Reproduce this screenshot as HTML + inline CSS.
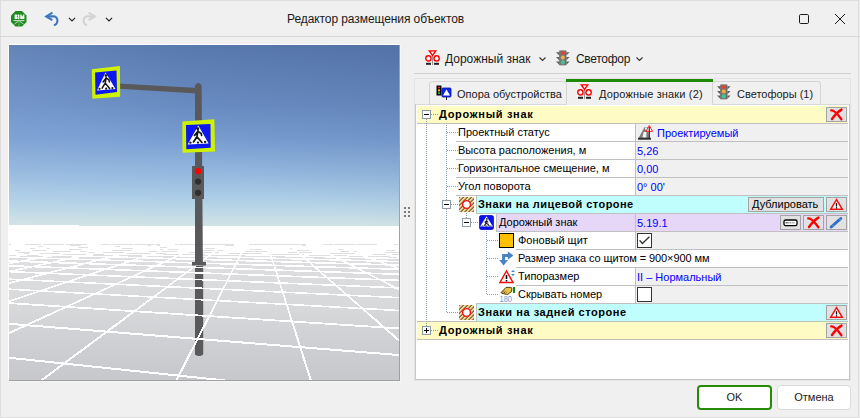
<!DOCTYPE html>
<html><head><meta charset="utf-8">
<style>
*{margin:0;padding:0;box-sizing:border-box}
html,body{width:860px;height:418px;overflow:hidden;background:#f0f0f0;font-family:"Liberation Sans",sans-serif;color:#000}
.a{position:absolute}
#win{position:absolute;left:0;top:0;width:859px;height:418px;border:1px solid #dddddd}
.t11{font-size:11px;line-height:13px;white-space:nowrap}
.b12{font-size:11px;font-weight:bold;line-height:13px;white-space:nowrap}
.ui{font-size:11px;line-height:13px;white-space:nowrap;color:#1a1a1a}
.row{position:absolute;height:17px}
.hl{position:absolute;height:1px;background:#c8c8c8}
.dv{position:absolute;border-left:1px dotted #8a9aa0;width:0}
.dh{position:absolute;border-top:1px dotted #8a9aa0;height:0}
.exp{position:absolute;width:9px;height:9px;border:1px solid #8fa3ad;background:#fff}
.exp:after{content:"";position:absolute;left:1px;top:3px;width:5px;height:1px;background:#000}
.exp.plus:before{content:"";position:absolute;left:3px;top:1px;width:1px;height:5px;background:#000}
.btn{position:absolute;border:1px solid #a0a0a0;background:#e6e6e6}
</style></head><body>
<div id="win"></div><div class="a" style="left:859px;top:0;width:1px;height:418px;background:#e9e9e9"></div>

<!-- title bar -->
<div class="a" style="left:0;top:36px;width:860px;height:1px;background:#d6d6d6"></div>

<!-- BIM logo -->
<svg class="a" style="left:10px;top:10px" width="18" height="18" viewBox="0 0 18 18">
<polygon points="5.5,1 12,1 16.5,5.5 16.5,12 12,16.5 5.5,16.5 1,12 1,5.5" fill="#1f8a1f"/>
<path d="M4.6 4.5 h2 a1.1 1.1 0 0 1 0 2.2 a1.2 1.2 0 0 1 0 2.4 h-2 Z" fill="#e8f4e8"/>
<rect x="8" y="4.5" width="1.4" height="4.6" fill="#e8f4e8"/>
<path d="M10.2 9.1 V4.5 H11.4 L12.3 6.8 L13.2 4.5 H14.4 V9.1 Z" fill="#e8f4e8"/>
<path d="M3.5 10.6 H14.5" stroke="#fff" stroke-width="0.8"/>
<path d="M8.5 11.2 L4.5 14 M9.5 11.2 L13.5 14 M9 12.5 V13.4 M9 14.3 V15.5" stroke="#dfeedd" stroke-width="0.8" fill="none"/>
</svg>
<!-- undo -->
<svg class="a" style="left:42px;top:9px" width="20" height="20" viewBox="0 0 20 20">
<path d="M10.5 3.6 L4.2 7.4 L10.3 11.2" stroke="#3b78c1" stroke-width="2.1" fill="none" stroke-linejoin="miter"/>
<path d="M4.8 7.4 H12 A3.5 4.3 0 0 1 11.8 16" stroke="#3b78c1" stroke-width="2.1" fill="none"/>
</svg>
<svg class="a" style="left:68px;top:17px" width="8" height="5" viewBox="0 0 8 5"><path d="M0.9 0.9 L4 4 L7.1 0.9" stroke="#222" stroke-width="1.1" fill="none"/></svg>
<svg class="a" style="left:79px;top:9px" width="20" height="20" viewBox="0 0 20 20">
<path d="M9.5 3.6 L15.8 7.4 L9.7 11.2" stroke="#d3d3d3" stroke-width="2.1" fill="none"/>
<path d="M15.2 7.4 H8 A3.5 4.3 0 0 0 8.2 16" stroke="#d3d3d3" stroke-width="2.1" fill="none"/>
</svg>
<svg class="a" style="left:105px;top:17px" width="8" height="5" viewBox="0 0 8 5"><path d="M0.9 0.9 L4 4 L7.1 0.9" stroke="#222" stroke-width="1.1" fill="none"/></svg>

<div class="a" style="left:287px;top:12px;font-size:12px;line-height:14px;color:#1a1a1a;white-space:nowrap;letter-spacing:-0.08px">Редактор размещения объектов</div>

<svg class="a" style="left:798px;top:13px" width="12" height="12" viewBox="0 0 12 12"><rect x="1.5" y="1.5" width="9" height="9" rx="1.2" stroke="#1a1a1a" stroke-width="1" fill="none"/></svg>
<svg class="a" style="left:834px;top:13px" width="12" height="12" viewBox="0 0 12 12"><path d="M1 1 L11 11 M11 1 L1 11" stroke="#1a1a1a" stroke-width="1" fill="none"/></svg>

<!-- 3D view -->
<div class="a" style="left:8px;top:44px;width:393px;height:338px;background:#fff"></div>
<div class="a" style="left:400px;top:44px;width:1px;height:338px;background:#f5f5f5"></div>
<div class="a" style="left:8px;top:381px;width:393px;height:1px;background:#f5f5f5"></div>
<div class="a" style="left:399px;top:45px;width:1px;height:336px;background:#a0a0a0"></div>
<div class="a" style="left:9px;top:380px;width:391px;height:1px;background:#a0a0a0"></div>
<div class="a" style="left:9px;top:45px;width:390px;height:181px;background:linear-gradient(to bottom,#5f82b8 0px,#6c90c7 60px,#7a9fd3 95px,#96badf 130px,#aacbe6 150px,#bcd7e6 165px,#d3e3e4 181px)"></div>
<div class="a" style="left:9px;top:45px;width:390px;height:181px;background:linear-gradient(to right,rgba(255,255,255,0.05) 0%,rgba(255,255,255,0) 45%,rgba(0,0,0,0) 55%),linear-gradient(200deg,rgba(0,10,50,0.13) 0%,rgba(0,10,50,0.05) 35%,rgba(0,0,0,0) 60%)"></div>
<div class="a" style="left:9px;top:226px;width:390px;height:154px;background:linear-gradient(to bottom,#ffffff 0px,#ffffff 18px,#e0e0e2 18px,#d8d9db 79px,#cfd0d3 114px,#c7c8cb 153px)"></div>
<div class="a" style="left:9px;top:225px;width:70px;height:1px;background:#fff"></div>
<svg class="a" style="left:0;top:0" width="420" height="400"><path d="M195 266 H203.2 V354.5 Q199 357.5 195 354.5 Z" fill="#59595b"/></svg>
<svg class="a" style="left:9px;top:45px" width="390" height="335" viewBox="0 0 390 335"><path d="M-68.22 368.32L-27.89 374.51M-68.61 305.55L447.74 359.81M-68.80 273.28L448.99 314.78M-68.89 319.66L-47.13 309.69M-47.13 309.69L-25.36 299.72M-25.36 299.72L-3.60 289.75M-3.60 289.75L18.17 279.78M-19.01 373.53L0.45 359.07M0.45 359.07L19.91 344.61M19.91 344.61L39.37 330.15M39.37 330.15L58.83 315.69M58.83 315.69L78.29 301.23M78.29 301.23L97.75 286.77M97.75 286.77L117.22 272.31M147.78 373.60L155.19 359.14M155.19 359.14L162.59 344.67M162.59 344.67L169.99 330.21M169.99 330.21L177.40 315.74M177.40 315.74L184.80 301.28M184.80 301.28L192.20 286.82M192.20 286.82L199.61 272.35M314.04 373.68L309.42 359.20M309.42 359.20L304.81 344.73M304.81 344.73L300.19 330.26M300.19 330.26L295.58 315.79M295.58 315.79L290.96 301.32M290.96 301.32L286.35 286.84M286.35 286.84L281.73 272.37M450.16 347.93L436.03 335.60M436.03 335.60L421.90 323.28M421.90 323.28L407.78 310.95M407.78 310.95L393.65 298.63M393.65 298.63L379.52 286.30M379.52 286.30L365.39 273.98" stroke="#ffffff" stroke-width="2.0" fill="none" shape-rendering="crispEdges"/><path d="M-68.93 253.63L449.75 287.31M-68.69 278.96L-48.80 272.38M-48.80 272.38L-28.90 265.80M-28.90 265.80L-9.01 259.22M18.17 279.78L39.93 269.81M39.93 269.81L61.70 259.84M117.22 272.31L136.68 257.85M199.61 272.35L207.01 257.89M281.73 272.37L277.12 257.90M365.39 273.98L351.26 261.65M450.21 274.99L437.90 268.75M437.90 268.75L425.58 262.50" stroke="#ffffff" stroke-width="1.8" fill="none" shape-rendering="crispEdges"/><path d="M-67.65 240.48L450.27 268.82M-67.90 230.95L450.64 255.51M-68.09 223.77L450.91 245.48M-68.24 218.17L449.35 237.57M-68.36 213.67L449.70 231.30M-68.45 209.99L449.99 226.15M-68.53 206.91L450.23 221.85M-68.60 204.31L450.43 218.21M-68.66 202.07L450.61 215.08M-68.71 200.13L450.76 212.36M2.19 200.01L450.89 209.98M77.56 200.01L450.06 207.86M151.36 200.01L450.22 206.00M224.82 200.01L450.36 204.32M296.68 200.00L450.48 202.82M368.29 200.01L450.60 201.45M438.29 200.00L450.70 200.21M-68.70 200.95L-67.79 200.87M-67.79 200.87L-66.87 200.79M-66.87 200.79L-65.96 200.71M-65.96 200.71L-65.04 200.63M-65.04 200.63L-64.13 200.56M-64.13 200.56L-63.21 200.48M-63.21 200.48L-62.30 200.40M-62.30 200.40L-61.38 200.32M-61.38 200.32L-60.47 200.24M-60.47 200.24L-59.55 200.16M-59.55 200.16L-58.64 200.08M-58.64 200.08L-57.72 200.00M-68.75 203.19L-65.91 202.92M-65.91 202.92L-63.07 202.66M-63.07 202.66L-60.24 202.40M-60.24 202.40L-57.40 202.13M-57.40 202.13L-54.56 201.87M-54.56 201.87L-51.73 201.60M-51.73 201.60L-48.89 201.34M-48.89 201.34L-46.05 201.08M-46.05 201.08L-43.22 200.81M-43.22 200.81L-40.38 200.55M-40.38 200.55L-37.54 200.28M-37.54 200.28L-34.71 200.02M-68.80 205.82L-64.02 205.33M-64.02 205.33L-59.24 204.85M-59.24 204.85L-54.46 204.36M-54.46 204.36L-49.68 203.88M-49.68 203.88L-44.90 203.39M-44.90 203.39L-40.12 202.91M-40.12 202.91L-35.34 202.43M-35.34 202.43L-30.56 201.94M-30.56 201.94L-25.78 201.46M-25.78 201.46L-21.00 200.97M-21.00 200.97L-16.22 200.49M-16.22 200.49L-11.44 200.00M-68.85 208.94L-62.16 208.19M-62.16 208.19L-55.48 207.45M-55.48 207.45L-48.79 206.71M-48.79 206.71L-42.10 205.97M-42.10 205.97L-35.41 205.22M-35.41 205.22L-28.72 204.48M-28.72 204.48L-22.03 203.74M-22.03 203.74L-15.34 202.99M-15.34 202.99L-8.65 202.25M-8.65 202.25L-1.96 201.51M-1.96 201.51L4.73 200.76M4.73 200.76L11.42 200.02M-68.92 212.71L-60.31 211.65M-60.31 211.65L-51.69 210.59M-51.69 210.59L-43.08 209.53M-43.08 209.53L-34.46 208.48M-34.46 208.48L-25.85 207.42M-25.85 207.42L-17.23 206.36M-17.23 206.36L-8.61 205.30M-8.61 205.30L0.00 204.24M0.00 204.24L8.62 203.18M8.62 203.18L17.23 202.12M17.23 202.12L25.85 201.06M25.85 201.06L34.47 200.01M-68.39 217.28L-57.93 215.84M-57.93 215.84L-47.46 214.40M-47.46 214.40L-37.00 212.96M-37.00 212.96L-26.54 211.52M-26.54 211.52L-16.07 210.09M-16.07 210.09L-5.61 208.65M-5.61 208.65L4.85 207.21M4.85 207.21L15.32 205.77M15.32 205.77L25.78 204.34M25.78 204.34L36.24 202.90M36.24 202.90L46.71 201.46M46.71 201.46L57.17 200.02M-68.42 223.13L-56.05 221.20M-56.05 221.20L-43.68 219.27M-43.68 219.27L-31.31 217.35M-31.31 217.35L-18.94 215.42M-18.94 215.42L-6.57 213.49M-6.57 213.49L5.80 211.57M5.80 211.57L18.17 209.64M18.17 209.64L30.54 207.71M30.54 207.71L42.91 205.79M42.91 205.79L55.27 203.86M55.27 203.86L67.64 201.93M67.64 201.93L80.01 200.01M-68.46 230.75L-54.21 228.19M-54.21 228.19L-39.95 225.63M-39.95 225.63L-25.70 223.07M-25.70 223.07L-11.45 220.51M-11.45 220.51L2.80 217.95M2.80 217.95L17.05 215.39M17.05 215.39L31.31 212.83M31.31 212.83L45.56 210.27M45.56 210.27L59.81 207.71M59.81 207.71L74.06 205.14M74.06 205.14L88.31 202.58M88.31 202.58L102.57 200.02M-68.51 241.09L-52.37 237.67M-52.37 237.67L-36.22 234.24M-36.22 234.24L-20.08 230.82M-20.08 230.82L-3.94 227.40M-3.94 227.40L12.20 223.97M12.20 223.97L28.35 220.55M28.35 220.55L44.49 217.13M44.49 217.13L60.63 213.70M60.63 213.70L76.77 210.28M76.77 210.28L92.92 206.86M92.92 206.86L109.06 203.43M109.06 203.43L125.20 200.01M-68.58 255.92L-50.57 251.26M-50.57 251.26L-32.55 246.60M-32.55 246.60L-14.53 241.94M-14.53 241.94L3.48 237.29M3.48 237.29L21.50 232.63M21.50 232.63L39.51 227.97M39.51 227.97L57.53 223.31M57.53 223.31L75.54 218.66M75.54 218.66L93.56 214.00M93.56 214.00L111.57 209.34M111.57 209.34L129.59 204.68M129.59 204.68L147.60 200.02M-9.01 259.22L10.88 252.64M10.88 252.64L30.78 246.06M30.78 246.06L50.67 239.48M50.67 239.48L70.57 232.91M70.57 232.91L90.46 226.33M90.46 226.33L110.35 219.75M110.35 219.75L130.25 213.17M130.25 213.17L150.14 206.59M150.14 206.59L170.04 200.01M61.70 259.84L83.46 249.87M83.46 249.87L105.23 239.90M105.23 239.90L126.99 229.93M126.99 229.93L148.76 219.96M148.76 219.96L170.52 209.99M170.52 209.99L192.29 200.03M136.68 257.85L156.14 243.39M156.14 243.39L175.60 228.93M175.60 228.93L195.06 214.47M195.06 214.47L214.52 200.01M207.01 257.89L214.41 243.42M214.41 243.42L221.82 228.96M221.82 228.96L229.22 214.49M229.22 214.49L236.62 200.03M277.12 257.90L272.50 243.43M272.50 243.43L267.89 228.96M267.89 228.96L263.27 214.48M263.27 214.48L258.66 200.01M351.26 261.65L337.13 249.33M337.13 249.33L323.00 237.00M323.00 237.00L308.87 224.68M308.87 224.68L294.74 212.35M294.74 212.35L280.62 200.03M425.58 262.50L413.27 256.25M413.27 256.25L400.96 250.00M400.96 250.00L388.64 243.75M388.64 243.75L376.33 237.50M376.33 237.50L364.02 231.25M364.02 231.25L351.71 225.01M351.71 225.01L339.39 218.76M339.39 218.76L327.08 212.51M327.08 212.51L314.77 206.26M314.77 206.26L302.45 200.01M450.85 245.37L440.30 241.59M440.30 241.59L429.75 237.82M429.75 237.82L419.21 234.04M419.21 234.04L408.66 230.26M408.66 230.26L398.11 226.48M398.11 226.48L387.56 222.70M387.56 222.70L377.01 218.92M377.01 218.92L366.46 215.14M366.46 215.14L355.91 211.36M355.91 211.36L345.36 207.59M345.36 207.59L334.81 203.81M334.81 203.81L324.27 200.03M450.72 229.05L441.99 226.63M441.99 226.63L433.25 224.21M433.25 224.21L424.52 221.79M424.52 221.79L415.78 219.37M415.78 219.37L407.05 216.95M407.05 216.95L398.32 214.53M398.32 214.53L389.58 212.11M389.58 212.11L380.85 209.69M380.85 209.69L372.11 207.27M372.11 207.27L363.38 204.85M363.38 204.85L354.64 202.43M354.64 202.43L345.91 200.01M450.64 218.80L443.72 217.24M443.72 217.24L436.79 215.67M436.79 215.67L429.87 214.11M429.87 214.11L422.95 212.55M422.95 212.55L416.03 210.98M416.03 210.98L409.11 209.42M409.11 209.42L402.19 207.85M402.19 207.85L395.27 206.29M395.27 206.29L388.34 204.72M388.34 204.72L381.42 203.16M381.42 203.16L374.50 201.59M374.50 201.59L367.58 200.03M450.91 211.83L445.76 210.85M445.76 210.85L440.60 209.86M440.60 209.86L435.44 208.88M435.44 208.88L430.29 207.89M430.29 207.89L425.13 206.91M425.13 206.91L419.97 205.92M419.97 205.92L414.82 204.94M414.82 204.94L409.66 203.95M409.66 203.95L404.50 202.97M404.50 202.97L399.35 201.98M399.35 201.98L394.19 201.00M394.19 201.00L389.03 200.01M450.83 206.69L447.46 206.13M447.46 206.13L444.08 205.58M444.08 205.58L440.71 205.02M440.71 205.02L437.34 204.46M437.34 204.46L433.97 203.90M433.97 203.90L430.60 203.35M430.60 203.35L427.23 202.79M427.23 202.79L423.86 202.23M423.86 202.23L420.49 201.67M420.49 201.67L417.12 201.12M417.12 201.12L413.75 200.56M413.75 200.56L410.38 200.00M450.76 202.78L449.18 202.55M449.18 202.55L447.60 202.32M447.60 202.32L446.03 202.09M446.03 202.09L444.45 201.86M444.45 201.86L442.87 201.63M442.87 201.63L441.29 201.40M441.29 201.40L439.71 201.17M439.71 201.17L438.14 200.94M438.14 200.94L436.56 200.71M436.56 200.71L434.98 200.48M434.98 200.48L433.40 200.25M433.40 200.25L431.83 200.02" stroke="#ffffff" stroke-width="1.6" fill="none" shape-rendering="crispEdges"/></svg>
<svg class="a" style="left:8px;top:44px" width="391" height="336" viewBox="8 44 391 336"><defs><clipPath id="vc"><rect x="9" y="45" width="390" height="335"/></clipPath></defs><g clip-path="url(#vc)"><path d="M195 265 V85.5 Q198.3 80.6 201.6 85.5 L202.9 265 Z" fill="#59595b"/><polygon points="192,262 206,262 206,265.5 192,265.5" fill="#59595b"/><polygon points="119,83.5 198,88 198,93.5 119,88.8" fill="#59595b"/><polygon points="91.8,69.3 119.9,66.1 120.2,96.8 92.3,98.7" fill="#cff200"/><polygon points="95,72.4 116.5,70.5 117,92.1 95.5,94.7" fill="#0c18ee"/><polygon points="105.5,72.6 97,90.5 115.5,89" fill="#ffffff"/><g transform="translate(97,72.6) scale(1.028,0.994)"><circle cx="8.7" cy="2.9" r="1.3" fill="#111"/><path d="M8.9 4.8 L8 10.6 M8.8 5.4 L11.6 7.4 L12 9.4 M8.5 5.8 L5.9 9.4 M8 10.6 L5 15.6 M8 10.6 L12.3 16" stroke="#151515" stroke-width="1.5" fill="none" stroke-linecap="round" stroke-linejoin="round"/><circle cx="2.4" cy="16.3" r="1.1" fill="#222"/><circle cx="8.9" cy="16.2" r="1.1" fill="#222"/><circle cx="15" cy="15.6" r="1.1" fill="#222"/></g><polygon points="182.3,121.4 214.4,119.3 215,151.4 182.5,152.7" fill="#cff200"/><polygon points="186,125 210.5,124 210.7,147.7 186.3,149.3" fill="#0c18ee"/><polygon points="198.3,125.6 187.6,144.5 208.6,143.5" fill="#ffffff"/><g transform="translate(187.6,125.6) scale(1.167,1.050)"><circle cx="8.7" cy="2.9" r="1.3" fill="#111"/><path d="M8.9 4.8 L8 10.6 M8.8 5.4 L11.6 7.4 L12 9.4 M8.5 5.8 L5.9 9.4 M8 10.6 L5 15.6 M8 10.6 L12.3 16" stroke="#151515" stroke-width="1.5" fill="none" stroke-linecap="round" stroke-linejoin="round"/><circle cx="2.4" cy="16.3" r="1.1" fill="#222"/><circle cx="8.9" cy="16.2" r="1.1" fill="#222"/><circle cx="15" cy="15.6" r="1.1" fill="#222"/></g><rect x="192" y="166" width="12" height="33" fill="#59595b"/><circle cx="198.1" cy="171.2" r="3.1" fill="#ff0000"/><circle cx="198.1" cy="181.6" r="3.1" fill="#2e2e2e"/><circle cx="198.1" cy="192.8" r="3.1" fill="#2e2e2e"/></g></svg>


<!-- grip -->
<div class="a" style="left:404px;top:207px;width:2px;height:2px;background:#7c7c7c"></div><div class="a" style="left:404px;top:211px;width:2px;height:2px;background:#7c7c7c"></div><div class="a" style="left:404px;top:215px;width:2px;height:2px;background:#7c7c7c"></div><div class="a" style="left:408px;top:207px;width:2px;height:2px;background:#7c7c7c"></div><div class="a" style="left:408px;top:211px;width:2px;height:2px;background:#7c7c7c"></div><div class="a" style="left:408px;top:215px;width:2px;height:2px;background:#7c7c7c"></div>
<!-- right panel -->
<div class="a" style="left:414px;top:73px;width:437px;height:1px;background:#d2d2d2"></div>
<div class="a" style="left:414px;top:78px;width:437px;height:1px;background:#e2e2e2"></div>
<div class="a" style="left:414px;top:78px;width:1px;height:303px;background:#e2e2e2"></div>
<div class="a" style="left:850px;top:78px;width:1px;height:303px;background:#e2e2e2"></div>
<div class="a" style="left:414px;top:380px;width:437px;height:1px;background:#e2e2e2"></div>
<div class="a" style="left:429px;top:81px;width:138px;height:24px;border:1px solid #d4d4d4;border-radius:3px 3px 0 0;background:#f0f0f0"></div>
<div class="a" style="left:712px;top:81px;width:109px;height:24px;border:1px solid #d4d4d4;border-radius:3px 3px 0 0;background:#f0f0f0"></div>
<div class="a" style="left:566px;top:79px;width:147px;height:3px;background:#1f8a06"></div>
<div class="a" style="left:415px;top:104px;width:435px;height:276px;border:1px solid #c8c8c8;border-top:1px solid #d8d8d8;background:#fff"></div>
<div class="a" style="left:567px;top:104px;width:145px;height:1px;background:#f0f0f0"></div>
<div class="a" style="left:417px;top:106px;width:431px;height:17px;background:#fefcc4"></div>
<div class="a" style="left:417px;top:123px;width:431px;height:1px;background:#c0c0c0"></div>
<div class="a" style="left:636px;top:124px;width:212px;height:17px;background:#f0f0f0"></div>
<div class="a" style="left:635px;top:124px;width:1px;height:17px;background:#c0c0c0"></div>
<div class="a" style="left:636px;top:142px;width:212px;height:17px;background:#f0f0f0"></div>
<div class="a" style="left:635px;top:142px;width:1px;height:17px;background:#c0c0c0"></div>
<div class="a" style="left:636px;top:160px;width:212px;height:17px;background:#f0f0f0"></div>
<div class="a" style="left:635px;top:160px;width:1px;height:17px;background:#c0c0c0"></div>
<div class="a" style="left:636px;top:178px;width:212px;height:17px;background:#f0f0f0"></div>
<div class="a" style="left:635px;top:178px;width:1px;height:17px;background:#c0c0c0"></div>
<div class="a" style="left:636px;top:232px;width:212px;height:17px;background:#f0f0f0"></div>
<div class="a" style="left:635px;top:232px;width:1px;height:17px;background:#c0c0c0"></div>
<div class="a" style="left:636px;top:268px;width:212px;height:17px;background:#f0f0f0"></div>
<div class="a" style="left:635px;top:268px;width:1px;height:17px;background:#c0c0c0"></div>
<div class="a" style="left:636px;top:286px;width:212px;height:17px;background:#f0f0f0"></div>
<div class="a" style="left:635px;top:286px;width:1px;height:17px;background:#c0c0c0"></div>
<div class="a" style="left:456px;top:141px;width:392px;height:1px;background:#c0c0c0"></div>
<div class="a" style="left:456px;top:159px;width:392px;height:1px;background:#c0c0c0"></div>
<div class="a" style="left:456px;top:177px;width:392px;height:1px;background:#c0c0c0"></div>
<div class="a" style="left:456px;top:195px;width:392px;height:1px;background:#c0c0c0"></div>
<div class="a" style="left:477px;top:196px;width:371px;height:17px;background:#c0fdfd"></div>
<div class="a" style="left:476px;top:196px;width:1px;height:17px;background:#c0c0c0"></div>
<div class="a" style="left:456px;top:195px;width:392px;height:1px;background:#c0c0c0"></div>
<div class="a" style="left:476px;top:213px;width:372px;height:1px;background:#c0c0c0"></div>
<div class="a" style="left:497px;top:214px;width:351px;height:17px;background:#e6d7f8"></div>
<div class="a" style="left:496px;top:214px;width:1px;height:17px;background:#c0c0c0"></div>
<div class="a" style="left:496px;top:231px;width:352px;height:1px;background:#c0c0c0"></div>
<div class="a" style="left:635px;top:214px;width:1px;height:17px;background:#c0c0c0"></div>
<div class="a" style="left:516px;top:249px;width:332px;height:1px;background:#c0c0c0"></div>
<div class="a" style="left:516px;top:267px;width:332px;height:1px;background:#c0c0c0"></div>
<div class="a" style="left:516px;top:285px;width:332px;height:1px;background:#c0c0c0"></div>
<div class="a" style="left:516px;top:303px;width:332px;height:1px;background:#c0c0c0"></div>
<div class="a" style="left:477px;top:304px;width:371px;height:17px;background:#c0fdfd"></div>
<div class="a" style="left:476px;top:303px;width:1px;height:18px;background:#c0c0c0"></div>
<div class="a" style="left:476px;top:303px;width:372px;height:1px;background:#c0c0c0"></div>
<div class="a" style="left:476px;top:321px;width:372px;height:1px;background:#c0c0c0"></div>
<div class="a" style="left:417px;top:322px;width:431px;height:17px;background:#fefcc4"></div>
<div class="a" style="left:417px;top:321px;width:431px;height:1px;background:#c0c0c0"></div>
<div class="a" style="left:417px;top:339px;width:431px;height:1px;background:#c0c0c0"></div>
<div class="a b12" style="left:439px;top:108px;color:#000;letter-spacing:0.7px">Дорожный знак</div>
<div class="a t11" style="left:458px;top:126px;color:#000;">Проектный статус</div>
<div class="a t11" style="left:657px;top:127px;color:#0000ff;">Проектируемый</div>
<div class="a t11" style="left:458px;top:144px;color:#000;">Высота расположения, м</div>
<div class="a t11" style="left:637px;top:145px;color:#0000ff;">5,26</div>
<div class="a t11" style="left:458px;top:162px;color:#000;">Горизонтальное смещение, м</div>
<div class="a t11" style="left:637px;top:163px;color:#0000ff;">0,00</div>
<div class="a t11" style="left:458px;top:180px;color:#000;">Угол поворота</div>
<div class="a t11" style="left:637px;top:181px;color:#0000ff;">0° 00'</div>
<div class="a b12" style="left:478px;top:198px;color:#000;letter-spacing:0.45px">Знаки на лицевой стороне</div>
<div class="a t11" style="left:499px;top:216px;color:#000;">Дорожный знак</div>
<div class="a t11" style="left:637px;top:217px;color:#0000ff;">5.19.1</div>
<div class="a t11" style="left:518px;top:234px;color:#000;">Фоновый щит</div>
<div class="a t11" style="left:518px;top:252px;color:#000;letter-spacing:-0.1px">Размер знака со щитом = 900×900 мм</div>
<div class="a t11" style="left:518px;top:270px;color:#000;">Типоразмер</div>
<div class="a t11" style="left:637px;top:271px;color:#0000ff;">II – Нормальный</div>
<div class="a t11" style="left:518px;top:288px;color:#000;">Скрывать номер</div>
<div class="a b12" style="left:478px;top:306px;color:#000;letter-spacing:0.55px">Знаки на задней стороне</div>
<div class="a b12" style="left:439px;top:324px;color:#000;letter-spacing:0.7px">Дорожный знак</div>
<div class="a" style="left:426px;top:119px;width:1px;height:1px;background:#8d9ba6"></div>
<div class="a" style="left:426px;top:121px;width:1px;height:1px;background:#8d9ba6"></div>
<div class="a" style="left:426px;top:123px;width:1px;height:1px;background:#8d9ba6"></div>
<div class="a" style="left:426px;top:125px;width:1px;height:1px;background:#8d9ba6"></div>
<div class="a" style="left:426px;top:127px;width:1px;height:1px;background:#8d9ba6"></div>
<div class="a" style="left:426px;top:129px;width:1px;height:1px;background:#8d9ba6"></div>
<div class="a" style="left:426px;top:131px;width:1px;height:1px;background:#8d9ba6"></div>
<div class="a" style="left:426px;top:133px;width:1px;height:1px;background:#8d9ba6"></div>
<div class="a" style="left:426px;top:135px;width:1px;height:1px;background:#8d9ba6"></div>
<div class="a" style="left:426px;top:137px;width:1px;height:1px;background:#8d9ba6"></div>
<div class="a" style="left:426px;top:139px;width:1px;height:1px;background:#8d9ba6"></div>
<div class="a" style="left:426px;top:141px;width:1px;height:1px;background:#8d9ba6"></div>
<div class="a" style="left:426px;top:143px;width:1px;height:1px;background:#8d9ba6"></div>
<div class="a" style="left:426px;top:145px;width:1px;height:1px;background:#8d9ba6"></div>
<div class="a" style="left:426px;top:147px;width:1px;height:1px;background:#8d9ba6"></div>
<div class="a" style="left:426px;top:149px;width:1px;height:1px;background:#8d9ba6"></div>
<div class="a" style="left:426px;top:151px;width:1px;height:1px;background:#8d9ba6"></div>
<div class="a" style="left:426px;top:153px;width:1px;height:1px;background:#8d9ba6"></div>
<div class="a" style="left:426px;top:155px;width:1px;height:1px;background:#8d9ba6"></div>
<div class="a" style="left:426px;top:157px;width:1px;height:1px;background:#8d9ba6"></div>
<div class="a" style="left:426px;top:159px;width:1px;height:1px;background:#8d9ba6"></div>
<div class="a" style="left:426px;top:161px;width:1px;height:1px;background:#8d9ba6"></div>
<div class="a" style="left:426px;top:163px;width:1px;height:1px;background:#8d9ba6"></div>
<div class="a" style="left:426px;top:165px;width:1px;height:1px;background:#8d9ba6"></div>
<div class="a" style="left:426px;top:167px;width:1px;height:1px;background:#8d9ba6"></div>
<div class="a" style="left:426px;top:169px;width:1px;height:1px;background:#8d9ba6"></div>
<div class="a" style="left:426px;top:171px;width:1px;height:1px;background:#8d9ba6"></div>
<div class="a" style="left:426px;top:173px;width:1px;height:1px;background:#8d9ba6"></div>
<div class="a" style="left:426px;top:175px;width:1px;height:1px;background:#8d9ba6"></div>
<div class="a" style="left:426px;top:177px;width:1px;height:1px;background:#8d9ba6"></div>
<div class="a" style="left:426px;top:179px;width:1px;height:1px;background:#8d9ba6"></div>
<div class="a" style="left:426px;top:181px;width:1px;height:1px;background:#8d9ba6"></div>
<div class="a" style="left:426px;top:183px;width:1px;height:1px;background:#8d9ba6"></div>
<div class="a" style="left:426px;top:185px;width:1px;height:1px;background:#8d9ba6"></div>
<div class="a" style="left:426px;top:187px;width:1px;height:1px;background:#8d9ba6"></div>
<div class="a" style="left:426px;top:189px;width:1px;height:1px;background:#8d9ba6"></div>
<div class="a" style="left:426px;top:191px;width:1px;height:1px;background:#8d9ba6"></div>
<div class="a" style="left:426px;top:193px;width:1px;height:1px;background:#8d9ba6"></div>
<div class="a" style="left:426px;top:195px;width:1px;height:1px;background:#8d9ba6"></div>
<div class="a" style="left:426px;top:197px;width:1px;height:1px;background:#8d9ba6"></div>
<div class="a" style="left:426px;top:199px;width:1px;height:1px;background:#8d9ba6"></div>
<div class="a" style="left:426px;top:201px;width:1px;height:1px;background:#8d9ba6"></div>
<div class="a" style="left:426px;top:203px;width:1px;height:1px;background:#8d9ba6"></div>
<div class="a" style="left:426px;top:205px;width:1px;height:1px;background:#8d9ba6"></div>
<div class="a" style="left:426px;top:207px;width:1px;height:1px;background:#8d9ba6"></div>
<div class="a" style="left:426px;top:209px;width:1px;height:1px;background:#8d9ba6"></div>
<div class="a" style="left:426px;top:211px;width:1px;height:1px;background:#8d9ba6"></div>
<div class="a" style="left:426px;top:213px;width:1px;height:1px;background:#8d9ba6"></div>
<div class="a" style="left:426px;top:215px;width:1px;height:1px;background:#8d9ba6"></div>
<div class="a" style="left:426px;top:217px;width:1px;height:1px;background:#8d9ba6"></div>
<div class="a" style="left:426px;top:219px;width:1px;height:1px;background:#8d9ba6"></div>
<div class="a" style="left:426px;top:221px;width:1px;height:1px;background:#8d9ba6"></div>
<div class="a" style="left:426px;top:223px;width:1px;height:1px;background:#8d9ba6"></div>
<div class="a" style="left:426px;top:225px;width:1px;height:1px;background:#8d9ba6"></div>
<div class="a" style="left:426px;top:227px;width:1px;height:1px;background:#8d9ba6"></div>
<div class="a" style="left:426px;top:229px;width:1px;height:1px;background:#8d9ba6"></div>
<div class="a" style="left:426px;top:231px;width:1px;height:1px;background:#8d9ba6"></div>
<div class="a" style="left:426px;top:233px;width:1px;height:1px;background:#8d9ba6"></div>
<div class="a" style="left:426px;top:235px;width:1px;height:1px;background:#8d9ba6"></div>
<div class="a" style="left:426px;top:237px;width:1px;height:1px;background:#8d9ba6"></div>
<div class="a" style="left:426px;top:239px;width:1px;height:1px;background:#8d9ba6"></div>
<div class="a" style="left:426px;top:241px;width:1px;height:1px;background:#8d9ba6"></div>
<div class="a" style="left:426px;top:243px;width:1px;height:1px;background:#8d9ba6"></div>
<div class="a" style="left:426px;top:245px;width:1px;height:1px;background:#8d9ba6"></div>
<div class="a" style="left:426px;top:247px;width:1px;height:1px;background:#8d9ba6"></div>
<div class="a" style="left:426px;top:249px;width:1px;height:1px;background:#8d9ba6"></div>
<div class="a" style="left:426px;top:251px;width:1px;height:1px;background:#8d9ba6"></div>
<div class="a" style="left:426px;top:253px;width:1px;height:1px;background:#8d9ba6"></div>
<div class="a" style="left:426px;top:255px;width:1px;height:1px;background:#8d9ba6"></div>
<div class="a" style="left:426px;top:257px;width:1px;height:1px;background:#8d9ba6"></div>
<div class="a" style="left:426px;top:259px;width:1px;height:1px;background:#8d9ba6"></div>
<div class="a" style="left:426px;top:261px;width:1px;height:1px;background:#8d9ba6"></div>
<div class="a" style="left:426px;top:263px;width:1px;height:1px;background:#8d9ba6"></div>
<div class="a" style="left:426px;top:265px;width:1px;height:1px;background:#8d9ba6"></div>
<div class="a" style="left:426px;top:267px;width:1px;height:1px;background:#8d9ba6"></div>
<div class="a" style="left:426px;top:269px;width:1px;height:1px;background:#8d9ba6"></div>
<div class="a" style="left:426px;top:271px;width:1px;height:1px;background:#8d9ba6"></div>
<div class="a" style="left:426px;top:273px;width:1px;height:1px;background:#8d9ba6"></div>
<div class="a" style="left:426px;top:275px;width:1px;height:1px;background:#8d9ba6"></div>
<div class="a" style="left:426px;top:277px;width:1px;height:1px;background:#8d9ba6"></div>
<div class="a" style="left:426px;top:279px;width:1px;height:1px;background:#8d9ba6"></div>
<div class="a" style="left:426px;top:281px;width:1px;height:1px;background:#8d9ba6"></div>
<div class="a" style="left:426px;top:283px;width:1px;height:1px;background:#8d9ba6"></div>
<div class="a" style="left:426px;top:285px;width:1px;height:1px;background:#8d9ba6"></div>
<div class="a" style="left:426px;top:287px;width:1px;height:1px;background:#8d9ba6"></div>
<div class="a" style="left:426px;top:289px;width:1px;height:1px;background:#8d9ba6"></div>
<div class="a" style="left:426px;top:291px;width:1px;height:1px;background:#8d9ba6"></div>
<div class="a" style="left:426px;top:293px;width:1px;height:1px;background:#8d9ba6"></div>
<div class="a" style="left:426px;top:295px;width:1px;height:1px;background:#8d9ba6"></div>
<div class="a" style="left:426px;top:297px;width:1px;height:1px;background:#8d9ba6"></div>
<div class="a" style="left:426px;top:299px;width:1px;height:1px;background:#8d9ba6"></div>
<div class="a" style="left:426px;top:301px;width:1px;height:1px;background:#8d9ba6"></div>
<div class="a" style="left:426px;top:303px;width:1px;height:1px;background:#8d9ba6"></div>
<div class="a" style="left:426px;top:305px;width:1px;height:1px;background:#8d9ba6"></div>
<div class="a" style="left:426px;top:307px;width:1px;height:1px;background:#8d9ba6"></div>
<div class="a" style="left:426px;top:309px;width:1px;height:1px;background:#8d9ba6"></div>
<div class="a" style="left:426px;top:311px;width:1px;height:1px;background:#8d9ba6"></div>
<div class="a" style="left:426px;top:313px;width:1px;height:1px;background:#8d9ba6"></div>
<div class="a" style="left:426px;top:315px;width:1px;height:1px;background:#8d9ba6"></div>
<div class="a" style="left:426px;top:317px;width:1px;height:1px;background:#8d9ba6"></div>
<div class="a" style="left:426px;top:319px;width:1px;height:1px;background:#8d9ba6"></div>
<div class="a" style="left:426px;top:321px;width:1px;height:1px;background:#8d9ba6"></div>
<div class="a" style="left:426px;top:323px;width:1px;height:1px;background:#8d9ba6"></div>
<div class="a" style="left:426px;top:325px;width:1px;height:1px;background:#8d9ba6"></div>
<div class="a" style="left:422px;top:110px;width:9px;height:9px;border:1px solid #8d9ba6;background:#fff"></div>
<div class="a" style="left:424px;top:114px;width:5px;height:1px;background:#000"></div>
<div class="a" style="left:431px;top:114px;width:1px;height:1px;background:#8d9ba6"></div>
<div class="a" style="left:433px;top:114px;width:1px;height:1px;background:#8d9ba6"></div>
<div class="a" style="left:435px;top:114px;width:1px;height:1px;background:#8d9ba6"></div>
<div class="a" style="left:437px;top:114px;width:1px;height:1px;background:#8d9ba6"></div>
<div class="a" style="left:422px;top:326px;width:9px;height:9px;border:1px solid #8d9ba6;background:#fff"></div>
<div class="a" style="left:424px;top:330px;width:5px;height:1px;background:#000"></div>
<div class="a" style="left:426px;top:328px;width:1px;height:5px;background:#000"></div>
<div class="a" style="left:431px;top:330px;width:1px;height:1px;background:#8d9ba6"></div>
<div class="a" style="left:433px;top:330px;width:1px;height:1px;background:#8d9ba6"></div>
<div class="a" style="left:435px;top:330px;width:1px;height:1px;background:#8d9ba6"></div>
<div class="a" style="left:437px;top:330px;width:1px;height:1px;background:#8d9ba6"></div>
<div class="a" style="left:446px;top:125px;width:1px;height:1px;background:#8d9ba6"></div>
<div class="a" style="left:446px;top:127px;width:1px;height:1px;background:#8d9ba6"></div>
<div class="a" style="left:446px;top:129px;width:1px;height:1px;background:#8d9ba6"></div>
<div class="a" style="left:446px;top:131px;width:1px;height:1px;background:#8d9ba6"></div>
<div class="a" style="left:446px;top:133px;width:1px;height:1px;background:#8d9ba6"></div>
<div class="a" style="left:446px;top:135px;width:1px;height:1px;background:#8d9ba6"></div>
<div class="a" style="left:446px;top:137px;width:1px;height:1px;background:#8d9ba6"></div>
<div class="a" style="left:446px;top:139px;width:1px;height:1px;background:#8d9ba6"></div>
<div class="a" style="left:446px;top:141px;width:1px;height:1px;background:#8d9ba6"></div>
<div class="a" style="left:446px;top:143px;width:1px;height:1px;background:#8d9ba6"></div>
<div class="a" style="left:446px;top:145px;width:1px;height:1px;background:#8d9ba6"></div>
<div class="a" style="left:446px;top:147px;width:1px;height:1px;background:#8d9ba6"></div>
<div class="a" style="left:446px;top:149px;width:1px;height:1px;background:#8d9ba6"></div>
<div class="a" style="left:446px;top:151px;width:1px;height:1px;background:#8d9ba6"></div>
<div class="a" style="left:446px;top:153px;width:1px;height:1px;background:#8d9ba6"></div>
<div class="a" style="left:446px;top:155px;width:1px;height:1px;background:#8d9ba6"></div>
<div class="a" style="left:446px;top:157px;width:1px;height:1px;background:#8d9ba6"></div>
<div class="a" style="left:446px;top:159px;width:1px;height:1px;background:#8d9ba6"></div>
<div class="a" style="left:446px;top:161px;width:1px;height:1px;background:#8d9ba6"></div>
<div class="a" style="left:446px;top:163px;width:1px;height:1px;background:#8d9ba6"></div>
<div class="a" style="left:446px;top:165px;width:1px;height:1px;background:#8d9ba6"></div>
<div class="a" style="left:446px;top:167px;width:1px;height:1px;background:#8d9ba6"></div>
<div class="a" style="left:446px;top:169px;width:1px;height:1px;background:#8d9ba6"></div>
<div class="a" style="left:446px;top:171px;width:1px;height:1px;background:#8d9ba6"></div>
<div class="a" style="left:446px;top:173px;width:1px;height:1px;background:#8d9ba6"></div>
<div class="a" style="left:446px;top:175px;width:1px;height:1px;background:#8d9ba6"></div>
<div class="a" style="left:446px;top:177px;width:1px;height:1px;background:#8d9ba6"></div>
<div class="a" style="left:446px;top:179px;width:1px;height:1px;background:#8d9ba6"></div>
<div class="a" style="left:446px;top:181px;width:1px;height:1px;background:#8d9ba6"></div>
<div class="a" style="left:446px;top:183px;width:1px;height:1px;background:#8d9ba6"></div>
<div class="a" style="left:446px;top:185px;width:1px;height:1px;background:#8d9ba6"></div>
<div class="a" style="left:446px;top:187px;width:1px;height:1px;background:#8d9ba6"></div>
<div class="a" style="left:446px;top:189px;width:1px;height:1px;background:#8d9ba6"></div>
<div class="a" style="left:446px;top:191px;width:1px;height:1px;background:#8d9ba6"></div>
<div class="a" style="left:446px;top:193px;width:1px;height:1px;background:#8d9ba6"></div>
<div class="a" style="left:446px;top:195px;width:1px;height:1px;background:#8d9ba6"></div>
<div class="a" style="left:446px;top:197px;width:1px;height:1px;background:#8d9ba6"></div>
<div class="a" style="left:446px;top:199px;width:1px;height:1px;background:#8d9ba6"></div>
<div class="a" style="left:446px;top:201px;width:1px;height:1px;background:#8d9ba6"></div>
<div class="a" style="left:446px;top:203px;width:1px;height:1px;background:#8d9ba6"></div>
<div class="a" style="left:446px;top:205px;width:1px;height:1px;background:#8d9ba6"></div>
<div class="a" style="left:446px;top:207px;width:1px;height:1px;background:#8d9ba6"></div>
<div class="a" style="left:446px;top:209px;width:1px;height:1px;background:#8d9ba6"></div>
<div class="a" style="left:446px;top:211px;width:1px;height:1px;background:#8d9ba6"></div>
<div class="a" style="left:446px;top:213px;width:1px;height:1px;background:#8d9ba6"></div>
<div class="a" style="left:446px;top:215px;width:1px;height:1px;background:#8d9ba6"></div>
<div class="a" style="left:446px;top:217px;width:1px;height:1px;background:#8d9ba6"></div>
<div class="a" style="left:446px;top:219px;width:1px;height:1px;background:#8d9ba6"></div>
<div class="a" style="left:446px;top:221px;width:1px;height:1px;background:#8d9ba6"></div>
<div class="a" style="left:446px;top:223px;width:1px;height:1px;background:#8d9ba6"></div>
<div class="a" style="left:446px;top:225px;width:1px;height:1px;background:#8d9ba6"></div>
<div class="a" style="left:446px;top:227px;width:1px;height:1px;background:#8d9ba6"></div>
<div class="a" style="left:446px;top:229px;width:1px;height:1px;background:#8d9ba6"></div>
<div class="a" style="left:446px;top:231px;width:1px;height:1px;background:#8d9ba6"></div>
<div class="a" style="left:446px;top:233px;width:1px;height:1px;background:#8d9ba6"></div>
<div class="a" style="left:446px;top:235px;width:1px;height:1px;background:#8d9ba6"></div>
<div class="a" style="left:446px;top:237px;width:1px;height:1px;background:#8d9ba6"></div>
<div class="a" style="left:446px;top:239px;width:1px;height:1px;background:#8d9ba6"></div>
<div class="a" style="left:446px;top:241px;width:1px;height:1px;background:#8d9ba6"></div>
<div class="a" style="left:446px;top:243px;width:1px;height:1px;background:#8d9ba6"></div>
<div class="a" style="left:446px;top:245px;width:1px;height:1px;background:#8d9ba6"></div>
<div class="a" style="left:446px;top:247px;width:1px;height:1px;background:#8d9ba6"></div>
<div class="a" style="left:446px;top:249px;width:1px;height:1px;background:#8d9ba6"></div>
<div class="a" style="left:446px;top:251px;width:1px;height:1px;background:#8d9ba6"></div>
<div class="a" style="left:446px;top:253px;width:1px;height:1px;background:#8d9ba6"></div>
<div class="a" style="left:446px;top:255px;width:1px;height:1px;background:#8d9ba6"></div>
<div class="a" style="left:446px;top:257px;width:1px;height:1px;background:#8d9ba6"></div>
<div class="a" style="left:446px;top:259px;width:1px;height:1px;background:#8d9ba6"></div>
<div class="a" style="left:446px;top:261px;width:1px;height:1px;background:#8d9ba6"></div>
<div class="a" style="left:446px;top:263px;width:1px;height:1px;background:#8d9ba6"></div>
<div class="a" style="left:446px;top:265px;width:1px;height:1px;background:#8d9ba6"></div>
<div class="a" style="left:446px;top:267px;width:1px;height:1px;background:#8d9ba6"></div>
<div class="a" style="left:446px;top:269px;width:1px;height:1px;background:#8d9ba6"></div>
<div class="a" style="left:446px;top:271px;width:1px;height:1px;background:#8d9ba6"></div>
<div class="a" style="left:446px;top:273px;width:1px;height:1px;background:#8d9ba6"></div>
<div class="a" style="left:446px;top:275px;width:1px;height:1px;background:#8d9ba6"></div>
<div class="a" style="left:446px;top:277px;width:1px;height:1px;background:#8d9ba6"></div>
<div class="a" style="left:446px;top:279px;width:1px;height:1px;background:#8d9ba6"></div>
<div class="a" style="left:446px;top:281px;width:1px;height:1px;background:#8d9ba6"></div>
<div class="a" style="left:446px;top:283px;width:1px;height:1px;background:#8d9ba6"></div>
<div class="a" style="left:446px;top:285px;width:1px;height:1px;background:#8d9ba6"></div>
<div class="a" style="left:446px;top:287px;width:1px;height:1px;background:#8d9ba6"></div>
<div class="a" style="left:446px;top:289px;width:1px;height:1px;background:#8d9ba6"></div>
<div class="a" style="left:446px;top:291px;width:1px;height:1px;background:#8d9ba6"></div>
<div class="a" style="left:446px;top:293px;width:1px;height:1px;background:#8d9ba6"></div>
<div class="a" style="left:446px;top:295px;width:1px;height:1px;background:#8d9ba6"></div>
<div class="a" style="left:446px;top:297px;width:1px;height:1px;background:#8d9ba6"></div>
<div class="a" style="left:446px;top:299px;width:1px;height:1px;background:#8d9ba6"></div>
<div class="a" style="left:446px;top:301px;width:1px;height:1px;background:#8d9ba6"></div>
<div class="a" style="left:446px;top:303px;width:1px;height:1px;background:#8d9ba6"></div>
<div class="a" style="left:446px;top:305px;width:1px;height:1px;background:#8d9ba6"></div>
<div class="a" style="left:446px;top:307px;width:1px;height:1px;background:#8d9ba6"></div>
<div class="a" style="left:446px;top:309px;width:1px;height:1px;background:#8d9ba6"></div>
<div class="a" style="left:446px;top:311px;width:1px;height:1px;background:#8d9ba6"></div>
<div class="a" style="left:447px;top:132px;width:1px;height:1px;background:#8d9ba6"></div>
<div class="a" style="left:449px;top:132px;width:1px;height:1px;background:#8d9ba6"></div>
<div class="a" style="left:451px;top:132px;width:1px;height:1px;background:#8d9ba6"></div>
<div class="a" style="left:453px;top:132px;width:1px;height:1px;background:#8d9ba6"></div>
<div class="a" style="left:455px;top:132px;width:1px;height:1px;background:#8d9ba6"></div>
<div class="a" style="left:457px;top:132px;width:1px;height:1px;background:#8d9ba6"></div>
<div class="a" style="left:447px;top:150px;width:1px;height:1px;background:#8d9ba6"></div>
<div class="a" style="left:449px;top:150px;width:1px;height:1px;background:#8d9ba6"></div>
<div class="a" style="left:451px;top:150px;width:1px;height:1px;background:#8d9ba6"></div>
<div class="a" style="left:453px;top:150px;width:1px;height:1px;background:#8d9ba6"></div>
<div class="a" style="left:455px;top:150px;width:1px;height:1px;background:#8d9ba6"></div>
<div class="a" style="left:457px;top:150px;width:1px;height:1px;background:#8d9ba6"></div>
<div class="a" style="left:447px;top:168px;width:1px;height:1px;background:#8d9ba6"></div>
<div class="a" style="left:449px;top:168px;width:1px;height:1px;background:#8d9ba6"></div>
<div class="a" style="left:451px;top:168px;width:1px;height:1px;background:#8d9ba6"></div>
<div class="a" style="left:453px;top:168px;width:1px;height:1px;background:#8d9ba6"></div>
<div class="a" style="left:455px;top:168px;width:1px;height:1px;background:#8d9ba6"></div>
<div class="a" style="left:457px;top:168px;width:1px;height:1px;background:#8d9ba6"></div>
<div class="a" style="left:447px;top:186px;width:1px;height:1px;background:#8d9ba6"></div>
<div class="a" style="left:449px;top:186px;width:1px;height:1px;background:#8d9ba6"></div>
<div class="a" style="left:451px;top:186px;width:1px;height:1px;background:#8d9ba6"></div>
<div class="a" style="left:453px;top:186px;width:1px;height:1px;background:#8d9ba6"></div>
<div class="a" style="left:455px;top:186px;width:1px;height:1px;background:#8d9ba6"></div>
<div class="a" style="left:457px;top:186px;width:1px;height:1px;background:#8d9ba6"></div>
<div class="a" style="left:442px;top:200px;width:9px;height:9px;border:1px solid #8d9ba6;background:#fff"></div>
<div class="a" style="left:444px;top:204px;width:5px;height:1px;background:#000"></div>
<div class="a" style="left:451px;top:204px;width:1px;height:1px;background:#8d9ba6"></div>
<div class="a" style="left:453px;top:204px;width:1px;height:1px;background:#8d9ba6"></div>
<div class="a" style="left:455px;top:204px;width:1px;height:1px;background:#8d9ba6"></div>
<div class="a" style="left:457px;top:204px;width:1px;height:1px;background:#8d9ba6"></div>
<div class="a" style="left:447px;top:312px;width:1px;height:1px;background:#8d9ba6"></div>
<div class="a" style="left:449px;top:312px;width:1px;height:1px;background:#8d9ba6"></div>
<div class="a" style="left:451px;top:312px;width:1px;height:1px;background:#8d9ba6"></div>
<div class="a" style="left:453px;top:312px;width:1px;height:1px;background:#8d9ba6"></div>
<div class="a" style="left:455px;top:312px;width:1px;height:1px;background:#8d9ba6"></div>
<div class="a" style="left:457px;top:312px;width:1px;height:1px;background:#8d9ba6"></div>
<div class="a" style="left:466px;top:213px;width:1px;height:1px;background:#8d9ba6"></div>
<div class="a" style="left:466px;top:215px;width:1px;height:1px;background:#8d9ba6"></div>
<div class="a" style="left:466px;top:217px;width:1px;height:1px;background:#8d9ba6"></div>
<div class="a" style="left:462px;top:218px;width:9px;height:9px;border:1px solid #8d9ba6;background:#fff"></div>
<div class="a" style="left:464px;top:222px;width:5px;height:1px;background:#000"></div>
<div class="a" style="left:471px;top:222px;width:1px;height:1px;background:#8d9ba6"></div>
<div class="a" style="left:473px;top:222px;width:1px;height:1px;background:#8d9ba6"></div>
<div class="a" style="left:475px;top:222px;width:1px;height:1px;background:#8d9ba6"></div>
<div class="a" style="left:477px;top:222px;width:1px;height:1px;background:#8d9ba6"></div>
<div class="a" style="left:486px;top:231px;width:1px;height:1px;background:#8d9ba6"></div>
<div class="a" style="left:486px;top:233px;width:1px;height:1px;background:#8d9ba6"></div>
<div class="a" style="left:486px;top:235px;width:1px;height:1px;background:#8d9ba6"></div>
<div class="a" style="left:486px;top:237px;width:1px;height:1px;background:#8d9ba6"></div>
<div class="a" style="left:486px;top:239px;width:1px;height:1px;background:#8d9ba6"></div>
<div class="a" style="left:486px;top:241px;width:1px;height:1px;background:#8d9ba6"></div>
<div class="a" style="left:486px;top:243px;width:1px;height:1px;background:#8d9ba6"></div>
<div class="a" style="left:486px;top:245px;width:1px;height:1px;background:#8d9ba6"></div>
<div class="a" style="left:486px;top:247px;width:1px;height:1px;background:#8d9ba6"></div>
<div class="a" style="left:486px;top:249px;width:1px;height:1px;background:#8d9ba6"></div>
<div class="a" style="left:486px;top:251px;width:1px;height:1px;background:#8d9ba6"></div>
<div class="a" style="left:486px;top:253px;width:1px;height:1px;background:#8d9ba6"></div>
<div class="a" style="left:486px;top:255px;width:1px;height:1px;background:#8d9ba6"></div>
<div class="a" style="left:486px;top:257px;width:1px;height:1px;background:#8d9ba6"></div>
<div class="a" style="left:486px;top:259px;width:1px;height:1px;background:#8d9ba6"></div>
<div class="a" style="left:486px;top:261px;width:1px;height:1px;background:#8d9ba6"></div>
<div class="a" style="left:486px;top:263px;width:1px;height:1px;background:#8d9ba6"></div>
<div class="a" style="left:486px;top:265px;width:1px;height:1px;background:#8d9ba6"></div>
<div class="a" style="left:486px;top:267px;width:1px;height:1px;background:#8d9ba6"></div>
<div class="a" style="left:486px;top:269px;width:1px;height:1px;background:#8d9ba6"></div>
<div class="a" style="left:486px;top:271px;width:1px;height:1px;background:#8d9ba6"></div>
<div class="a" style="left:486px;top:273px;width:1px;height:1px;background:#8d9ba6"></div>
<div class="a" style="left:486px;top:275px;width:1px;height:1px;background:#8d9ba6"></div>
<div class="a" style="left:486px;top:277px;width:1px;height:1px;background:#8d9ba6"></div>
<div class="a" style="left:486px;top:279px;width:1px;height:1px;background:#8d9ba6"></div>
<div class="a" style="left:486px;top:281px;width:1px;height:1px;background:#8d9ba6"></div>
<div class="a" style="left:486px;top:283px;width:1px;height:1px;background:#8d9ba6"></div>
<div class="a" style="left:486px;top:285px;width:1px;height:1px;background:#8d9ba6"></div>
<div class="a" style="left:486px;top:287px;width:1px;height:1px;background:#8d9ba6"></div>
<div class="a" style="left:486px;top:289px;width:1px;height:1px;background:#8d9ba6"></div>
<div class="a" style="left:486px;top:291px;width:1px;height:1px;background:#8d9ba6"></div>
<div class="a" style="left:486px;top:293px;width:1px;height:1px;background:#8d9ba6"></div>
<div class="a" style="left:487px;top:240px;width:1px;height:1px;background:#8d9ba6"></div>
<div class="a" style="left:489px;top:240px;width:1px;height:1px;background:#8d9ba6"></div>
<div class="a" style="left:491px;top:240px;width:1px;height:1px;background:#8d9ba6"></div>
<div class="a" style="left:493px;top:240px;width:1px;height:1px;background:#8d9ba6"></div>
<div class="a" style="left:495px;top:240px;width:1px;height:1px;background:#8d9ba6"></div>
<div class="a" style="left:497px;top:240px;width:1px;height:1px;background:#8d9ba6"></div>
<div class="a" style="left:487px;top:258px;width:1px;height:1px;background:#8d9ba6"></div>
<div class="a" style="left:489px;top:258px;width:1px;height:1px;background:#8d9ba6"></div>
<div class="a" style="left:491px;top:258px;width:1px;height:1px;background:#8d9ba6"></div>
<div class="a" style="left:493px;top:258px;width:1px;height:1px;background:#8d9ba6"></div>
<div class="a" style="left:495px;top:258px;width:1px;height:1px;background:#8d9ba6"></div>
<div class="a" style="left:497px;top:258px;width:1px;height:1px;background:#8d9ba6"></div>
<div class="a" style="left:487px;top:276px;width:1px;height:1px;background:#8d9ba6"></div>
<div class="a" style="left:489px;top:276px;width:1px;height:1px;background:#8d9ba6"></div>
<div class="a" style="left:491px;top:276px;width:1px;height:1px;background:#8d9ba6"></div>
<div class="a" style="left:493px;top:276px;width:1px;height:1px;background:#8d9ba6"></div>
<div class="a" style="left:495px;top:276px;width:1px;height:1px;background:#8d9ba6"></div>
<div class="a" style="left:497px;top:276px;width:1px;height:1px;background:#8d9ba6"></div>
<div class="a" style="left:487px;top:294px;width:1px;height:1px;background:#8d9ba6"></div>
<div class="a" style="left:489px;top:294px;width:1px;height:1px;background:#8d9ba6"></div>
<div class="a" style="left:491px;top:294px;width:1px;height:1px;background:#8d9ba6"></div>
<div class="a" style="left:493px;top:294px;width:1px;height:1px;background:#8d9ba6"></div>
<div class="a" style="left:495px;top:294px;width:1px;height:1px;background:#8d9ba6"></div>
<div class="a" style="left:497px;top:294px;width:1px;height:1px;background:#8d9ba6"></div>
<svg class="a" style="left:459px;top:197px" width="15" height="15" viewBox="0 0 15 15"><defs><pattern id="hp1" width="2.83" height="2.83" patternUnits="userSpaceOnUse" patternTransform="rotate(45)"><rect width="2.83" height="2.83" fill="#f9d38a"/><rect width="0.85" height="2.83" fill="#3d3a35"/></pattern></defs><rect width="15" height="15" fill="url(#hp1)"/><circle cx="7.5" cy="7.5" r="3.9" fill="#fff" stroke="#ff1010" stroke-width="1.4"/></svg>
<svg class="a" style="left:459px;top:305px" width="15" height="15" viewBox="0 0 15 15"><defs><pattern id="hp2" width="2.83" height="2.83" patternUnits="userSpaceOnUse" patternTransform="rotate(45)"><rect width="2.83" height="2.83" fill="#f9d38a"/><rect width="0.85" height="2.83" fill="#3d3a35"/></pattern></defs><rect width="15" height="15" fill="url(#hp2)"/><circle cx="7.5" cy="7.5" r="3.9" fill="#fff" stroke="#ff1010" stroke-width="1.4"/></svg>
<svg class="a" style="left:479px;top:215px" width="15" height="15" viewBox="0 0 15 15"><rect x="0.3" y="0.3" width="14.4" height="14.4" rx="2.6" fill="#0a10f5" stroke="#0000b0" stroke-width="0.6"/><path d="M7.5 1.3 L13.9 11.6 H1.1 Z" fill="#fff"/><circle cx="7.9" cy="3.9" r="0.9" fill="#222"/><path d="M7.8 5.2 L7 8.2 L5.4 10.6 M7.6 6 L9.2 7.4 M7 8.2 L9 9.2 L10 10.8 M7.2 5.8 L5.8 7.6" stroke="#1e1e1e" stroke-width="1.2" fill="none"/><path d="M2.5 11 h2 M6 11 h2.5 M10 11 h2.5" stroke="#444" stroke-width="1"/></svg>
<div class="a" style="left:499px;top:233px;width:15px;height:15px;border:1px solid #000;background:#ffc000"></div>
<svg class="a" style="left:499px;top:251px" width="15" height="15" viewBox="0 0 15 15"><path d="M4.6 9.5 V4.6 H9.5" stroke="#4a82c4" stroke-width="3" fill="none"/><path d="M8.8 0.4 L14.4 4.6 L8.8 8.8 Z" fill="#4a82c4"/><path d="M0.2 9 L9 9 L4.6 14.4 Z" fill="#4a82c4"/></svg>
<svg class="a" style="left:499px;top:269px" width="17" height="15" viewBox="0 0 17 15"><path d="M7.5 2 L14 13.5 H1 Z" fill="#fff" stroke="#f01010" stroke-width="1.5" stroke-linejoin="miter"/><path d="M7.5 6 V10" stroke="#000" stroke-width="1.6"/><rect x="6.7" y="11" width="1.6" height="1.5" fill="#000"/><path d="M12 3 L14 1 L16 3 Z M12 5 L14 7 L16 5 Z" fill="#3a8ad8"/></svg>
<svg class="a" style="left:499px;top:286px" width="18" height="18" viewBox="0 0 18 18"><path d="M7 1.4 H11.6 Q13 1.4 12.9 2.8 L12.6 5.4 Q12.4 6.4 11.2 6.4 L8.6 8.6 L7.6 8.4 L2.6 7.2 L2.2 6.4 Z" fill="#e9c347" stroke="#3a2a00" stroke-width="0.9" stroke-linejoin="round"/><path d="M3.5 6.6 l1 -1 M5 6.9 l1 -1 M6.5 7.4 l1 -1 M5.5 4.6 l1 1 M4.5 5.6 l1 1" stroke="#3a2a00" stroke-width="0.6"/><rect x="14" y="1" width="2" height="6" fill="#0a8a0a"/><text transform="translate(0.6 16) scale(0.79 1)" font-size="9.4" fill="#6d9bd3" font-family="Liberation Sans">180</text></svg>
<svg class="a" style="left:637px;top:124px" width="18" height="17" viewBox="0 0 18 17"><path d="M1.6 14 L7.6 3 H11.5 L12 14 Z" fill="#7c7c7c"/><rect x="8" y="3.4" width="2.4" height="2.2" fill="#f4f4f4"/><path d="M6.6 8 H9.4 V13.6 H5.4 Z" fill="#f4f4f4"/><rect x="1" y="13.8" width="13" height="1.9" fill="#2e2e2e"/><path d="M12.3 1.4 L15.6 7.4 H9 Z" fill="#fff" fill-opacity="0.85" stroke="#ff2a2a" stroke-width="1"/><path d="M12.3 3 V14" stroke="#111" stroke-width="1"/></svg>
<div class="a" style="left:748px;top:197px;width:76px;height:15px;border:1px solid #a4a4a4;background:#e1e1e1"></div>
<div class="a t11" style="left:752px;top:197px;line-height:14px">Дублировать</div>
<div class="a" style="left:826px;top:197px;width:21px;height:15px;border:1px solid #a4a4a4;background:#e1e1e1"></div>
<svg class="a" style="left:826px;top:197px" width="21" height="15" viewBox="0 0 21 15"><path d="M10.5 2.6 L16.3 12.3 H4.7 Z" fill="#fff" stroke="#f01010" stroke-width="1.5" stroke-linejoin="miter"/><path d="M10.5 6.2 V9.6" stroke="#000" stroke-width="1.3"/><rect x="9.85" y="10.2" width="1.3" height="1.3" fill="#000"/></svg>
<div class="a" style="left:826px;top:107px;width:21px;height:15px;border:1px solid #a4a4a4;background:#e1e1e1"></div>
<svg class="a" style="left:826px;top:107px" width="21" height="15" viewBox="0 0 21 15"><path d="M5.2 3.4 Q8.5 2.8 15.4 12.3" stroke="#ff0000" stroke-width="2.3" fill="none" stroke-linecap="round"/><path d="M15.5 2.6 Q11 5 6 12" stroke="#ff0000" stroke-width="2.4" fill="none" stroke-linecap="round"/></svg>
<div class="a" style="left:780px;top:215px;width:21px;height:15px;border:1px solid #a4a4a4;background:#e1e1e1"></div>
<svg class="a" style="left:780px;top:215px" width="21" height="15" viewBox="0 0 21 15"><rect x="4" y="5" width="13" height="5.6" rx="1.6" fill="#fff" stroke="#000" stroke-width="1.3"/><path d="M5.5 7.8 H7.8" stroke="#222" stroke-width="0.9"/><path d="M8 7.8 H14.5" stroke="#999" stroke-width="1.6" stroke-dasharray="1.2 0.6"/></svg>
<div class="a" style="left:803px;top:215px;width:21px;height:15px;border:1px solid #a4a4a4;background:#e1e1e1"></div>
<svg class="a" style="left:803px;top:215px" width="21" height="15" viewBox="0 0 21 15"><path d="M5.2 3.4 Q8.5 2.8 15.4 12.3" stroke="#ff0000" stroke-width="2.3" fill="none" stroke-linecap="round"/><path d="M15.5 2.6 Q11 5 6 12" stroke="#ff0000" stroke-width="2.4" fill="none" stroke-linecap="round"/></svg>
<div class="a" style="left:826px;top:215px;width:21px;height:15px;border:1px solid #a4a4a4;background:#e1e1e1"></div>
<svg class="a" style="left:826px;top:215px" width="21" height="15" viewBox="0 0 21 15"><path d="M5.2 12 L14.8 3.5" stroke="#2b6cc9" stroke-width="3" stroke-linecap="round"/><path d="M6.8 10.2 l1.2 1.2 M13.2 3.6 l1.2 1.2" stroke="#d8e4f4" stroke-width="0.7"/></svg>
<div class="a" style="left:826px;top:305px;width:21px;height:15px;border:1px solid #a4a4a4;background:#e1e1e1"></div>
<svg class="a" style="left:826px;top:305px" width="21" height="15" viewBox="0 0 21 15"><path d="M10.5 2.6 L16.3 12.3 H4.7 Z" fill="#fff" stroke="#f01010" stroke-width="1.5" stroke-linejoin="miter"/><path d="M10.5 6.2 V9.6" stroke="#000" stroke-width="1.3"/><rect x="9.85" y="10.2" width="1.3" height="1.3" fill="#000"/></svg>
<div class="a" style="left:826px;top:323px;width:21px;height:15px;border:1px solid #a4a4a4;background:#e1e1e1"></div>
<svg class="a" style="left:826px;top:323px" width="21" height="15" viewBox="0 0 21 15"><path d="M5.2 3.4 Q8.5 2.8 15.4 12.3" stroke="#ff0000" stroke-width="2.3" fill="none" stroke-linecap="round"/><path d="M15.5 2.6 Q11 5 6 12" stroke="#ff0000" stroke-width="2.4" fill="none" stroke-linecap="round"/></svg>
<div class="a" style="left:637px;top:233px;width:15px;height:15px;border:1.5px solid #333;background:#fff"></div>
<svg class="a" style="left:637px;top:233px" width="15" height="15" viewBox="0 0 15 15"><path d="M2.6 7.4 L5.4 10.5 L12.4 3.7" stroke="#333" stroke-width="1.4" fill="none"/></svg>
<div class="a" style="left:637px;top:287px;width:15px;height:15px;border:1.5px solid #333;background:#fff"></div>
<svg class="a" style="left:425px;top:50px" width="16" height="16" viewBox="0 0 16 16"><path d="M7.5 6 V15" stroke="#888" stroke-width="0.9"/><path d="M4.3 0.9 H10.7 L7.5 5.3 Z" fill="#fff" stroke="#ff0000" stroke-width="1.4" stroke-linejoin="miter"/><circle cx="3.4" cy="8.4" r="2.6" fill="#fff" stroke="#ff0000" stroke-width="1.4"/><circle cx="11.6" cy="8.4" r="2.6" fill="#fff" stroke="#ff0000" stroke-width="1.4"/><rect x="1" y="12.8" width="5" height="2" fill="#222"/><rect x="9" y="12.8" width="5" height="2" fill="#222"/></svg>
<div class="a" style="left:445px;top:52px;font-size:12px;line-height:14px;color:#1a1a1a;white-space:nowrap">Дорожный знак</div>
<svg class="a" style="left:539px;top:57px" width="7" height="5" viewBox="0 0 7 5"><path d="M0.5 0.5 L3.5 3.5 L6.5 0.5" stroke="#333" stroke-width="1.1" fill="none"/></svg>
<svg class="a" style="left:555px;top:50px" width="16" height="16" viewBox="0 0 16 16"><path d="M4.2 0.6 H11.4 V15.2 H4.2 Z" fill="#626262"/><path d="M5.2 0.6 H10.4 V15.2 H5.2 Z" fill="#7a7a7a"/><path d="M1 2.2 H4.2 V5.6 Z M14.6 2.2 H11.4 V5.6 Z M1 6.9 H4.2 V10.2 Z M14.6 6.9 H11.4 V10.2 Z M1 11.6 H4.2 V14.8 Z M14.6 11.6 H11.4 V14.8 Z" fill="#5e5e5e"/><circle cx="7.8" cy="2.9" r="2" fill="#e8412a"/><circle cx="7.8" cy="7.6" r="2" fill="#f4ac3c"/><circle cx="7.8" cy="12.2" r="2" fill="#3dc98d"/></svg>
<div class="a" style="left:576px;top:52px;font-size:12px;line-height:14px;color:#1a1a1a;white-space:nowrap;letter-spacing:-0.3px">Светофор</div>
<svg class="a" style="left:636px;top:57px" width="7" height="5" viewBox="0 0 7 5"><path d="M0.5 0.5 L3.5 3.5 L6.5 0.5" stroke="#333" stroke-width="1.1" fill="none"/></svg>
<svg class="a" style="left:435px;top:84px" width="18" height="17" viewBox="0 0 18 17"><rect x="1.5" y="1.5" width="5" height="10" fill="#000"/><circle cx="4" cy="3.6" r="1.1" fill="#f02020"/><circle cx="4" cy="6.4" r="1.1" fill="#e8d020"/><circle cx="4" cy="9.2" r="1.1" fill="#20c020"/><rect x="7" y="4" width="9" height="9" rx="1" fill="#1028f0" stroke="#0010a0" stroke-width="0.8"/><path d="M11.5 5.5 L15 11.5 H8 Z" fill="#fff"/><path d="M11.5 13 V16" stroke="#222" stroke-width="1"/></svg>
<div class="a" style="left:457px;top:88px;font-size:11px;line-height:13px;color:#1a1a1a;white-space:nowrap">Опора обустройства</div>
<svg class="a" style="left:577px;top:84px" width="16" height="16" viewBox="0 0 16 16"><path d="M7.5 6 V15" stroke="#888" stroke-width="0.9"/><path d="M4.3 0.9 H10.7 L7.5 5.3 Z" fill="#fff" stroke="#ff0000" stroke-width="1.4" stroke-linejoin="miter"/><circle cx="3.4" cy="8.4" r="2.6" fill="#fff" stroke="#ff0000" stroke-width="1.4"/><circle cx="11.6" cy="8.4" r="2.6" fill="#fff" stroke="#ff0000" stroke-width="1.4"/><rect x="1" y="12.8" width="5" height="2" fill="#222"/><rect x="9" y="12.8" width="5" height="2" fill="#222"/></svg>
<div class="a" style="left:599px;top:88px;font-size:11px;line-height:13px;color:#1a1a1a;white-space:nowrap;letter-spacing:0.15px">Дорожные знаки (2)</div>
<svg class="a" style="left:716px;top:84px" width="16" height="16" viewBox="0 0 16 16"><path d="M4.2 0.6 H11.4 V15.2 H4.2 Z" fill="#626262"/><path d="M5.2 0.6 H10.4 V15.2 H5.2 Z" fill="#7a7a7a"/><path d="M1 2.2 H4.2 V5.6 Z M14.6 2.2 H11.4 V5.6 Z M1 6.9 H4.2 V10.2 Z M14.6 6.9 H11.4 V10.2 Z M1 11.6 H4.2 V14.8 Z M14.6 11.6 H11.4 V14.8 Z" fill="#5e5e5e"/><circle cx="7.8" cy="2.9" r="2" fill="#e8412a"/><circle cx="7.8" cy="7.6" r="2" fill="#f4ac3c"/><circle cx="7.8" cy="12.2" r="2" fill="#3dc98d"/></svg>
<div class="a" style="left:737px;top:88px;font-size:11px;line-height:13px;color:#1a1a1a;white-space:nowrap">Светофоры (1)</div>


<!-- buttons -->
<div class="a" style="left:697px;top:385px;width:75px;height:25px;border:2px solid #268b07;border-radius:4px;background:#fff"></div>
<div class="a ui" style="left:697px;top:391px;width:75px;text-align:center">OK</div>
<div class="a" style="left:777px;top:385px;width:74px;height:25px;border:1px solid #dcdcdc;border-radius:4px;background:#fff"></div>
<div class="a ui" style="left:777px;top:391px;width:74px;text-align:center">Отмена</div>

</body></html>
